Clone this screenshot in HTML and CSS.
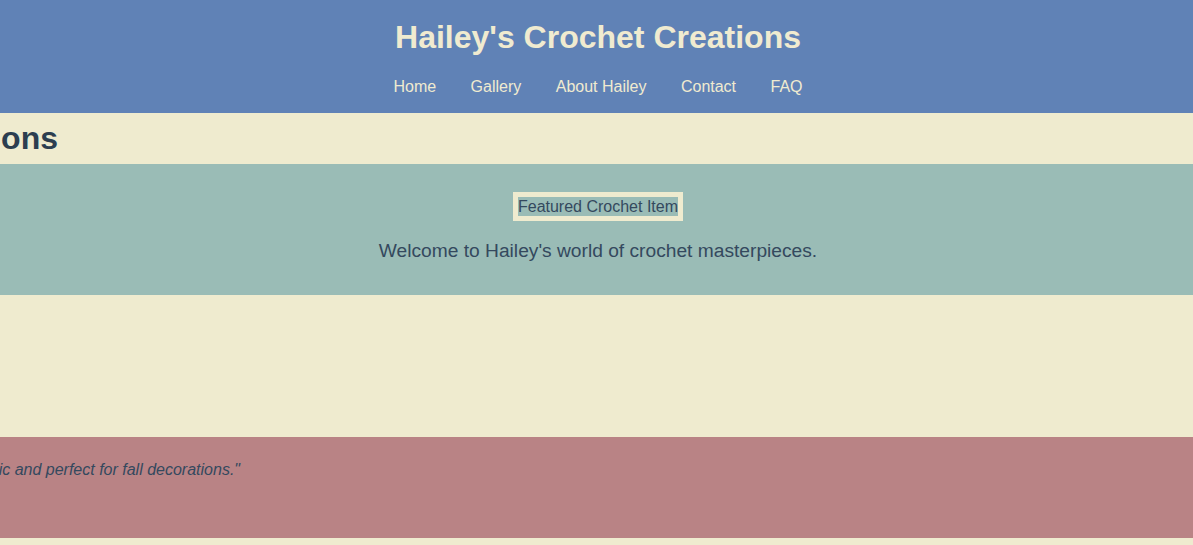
FILE: index.html
```html
<!DOCTYPE html>
<html lang="en">
<head>
<meta charset="utf-8">
<title>Hailey's Crochet Creations</title>
<link rel="stylesheet" href="styles.css">
</head>
<body>
<header class="site-header">
  <h1 class="site-title">Hailey's Crochet Creations</h1>
  <nav class="site-nav">
    <a href="#">Home</a>
    <a href="#">Gallery</a>
    <a href="#">About Hailey</a>
    <a href="#">Contact</a>
    <a href="#">FAQ</a>
  </nav>
</header>
<section class="heading-strip">
  <div class="track track-heading">
    <h2 class="section-title">Latest Creations</h2>
  </div>
</section>
<section class="hero">
  <div class="featured"><span class="featured-item">Featured Crochet Item</span></div>
  <p class="welcome">Welcome to Hailey's world of crochet masterpieces.</p>
</section>
<section class="spacer"></section>
<section class="testimonial">
  <div class="track track-quote">
    <p class="quote">"This pumpkin looks so realistic and perfect for fall decorations."</p>
  </div>
</section>
</body>
</html>
```
FILE: styles.css
```css
html, body {
  margin: 0;
  padding: 0;
}
body {
  background: #efebcf;
  font-family: "Liberation Sans", Arial, sans-serif;
  color: #34495e;
  overflow: hidden;
}
.site-header {
  background: #6082b6;
  color: #f0ebd0;
  text-align: center;
  padding: 19px 0 17px 3px;
}
.site-title {
  margin: 0 0 21px;
  font-size: 32px;
  line-height: 37px;
  font-weight: bold;
}
.site-nav {
  font-size: 16px;
  line-height: 19px;
}
.site-nav a {
  color: #f0ebd0;
  text-decoration: none;
  margin: 0 15px;
}
.heading-strip {
  padding: 7px 0;
}
.track {
  display: flex;
  justify-content: flex-end;
  white-space: nowrap;
}
.track-heading {
  width: 58px;
}
.section-title {
  margin: 0;
  font-size: 32px;
  line-height: 37px;
  font-weight: bold;
  color: #2c3e50;
}
.hero {
  background: #9abcb6;
  text-align: center;
  padding: 28px 0 15px 3px;
}
.featured {
  height: 29px;
}
.featured-item {
  display: inline-block;
  border: 5px solid #efebcf;
  font-size: 16px;
  line-height: 19px;
  color: #34495e;
}
.welcome {
  margin: 19px 0 18px;
  font-size: 19.2px;
  line-height: 22px;
}
.spacer {
  height: 142px;
}
.testimonial {
  background: #b98385;
  height: 101px;
  padding-top: 24px;
  box-sizing: border-box;
}
.track-quote {
  width: 240px;
}
.quote {
  margin: 0;
  font-size: 16px;
  line-height: 18px;
  font-style: italic;
  color: #34495e;
}
```
